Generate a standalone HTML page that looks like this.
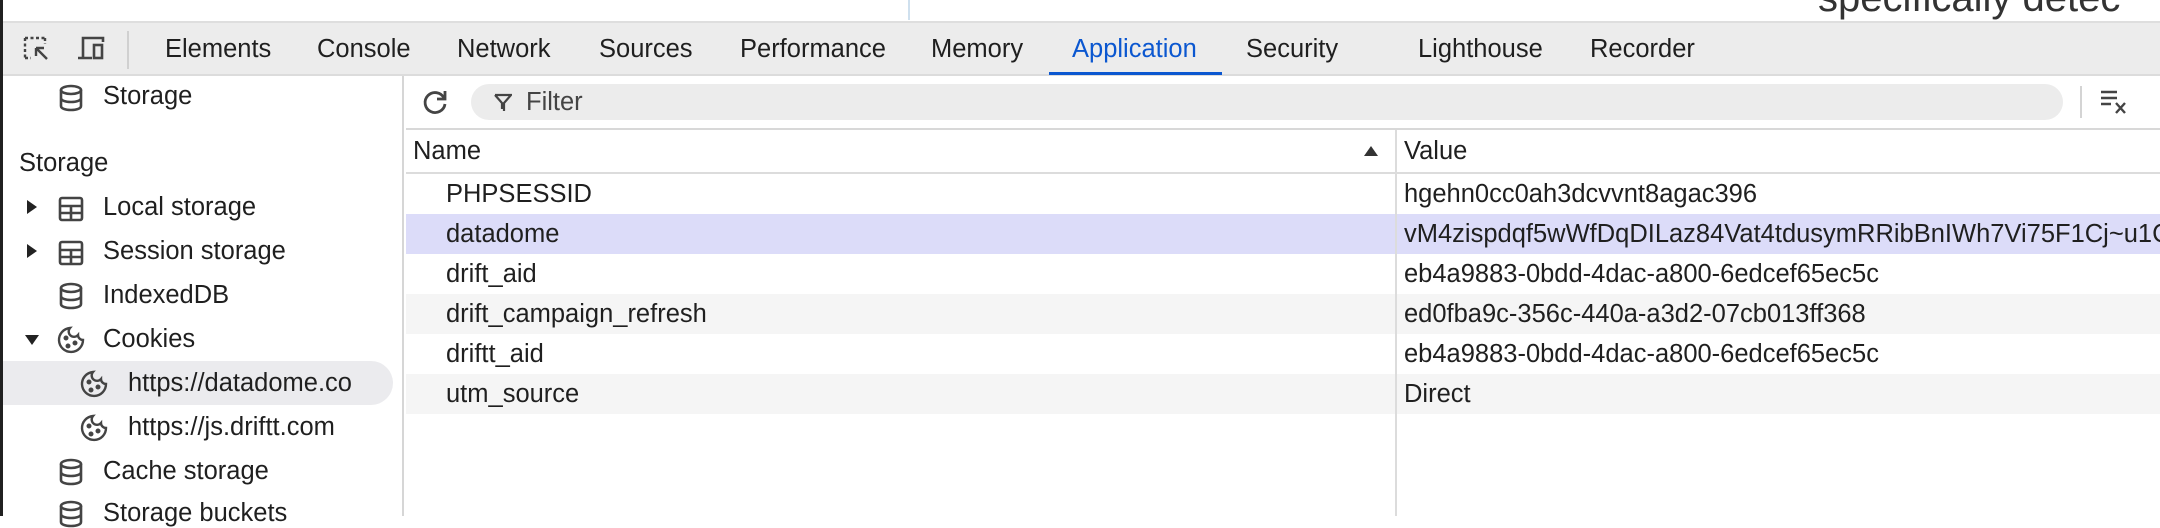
<!DOCTYPE html>
<html><head><meta charset="utf-8"><style>
*{margin:0;padding:0;box-sizing:border-box}
body{width:2160px;height:516px;overflow:hidden;background:#fff;font-family:"Liberation Sans",Arial,sans-serif;color:#1f1f1f;position:relative;font-size:25.5px}
.abs{position:absolute;white-space:nowrap}
#top{position:absolute;left:0;top:0;width:2160px;height:21px;background:#fff}
#tb{position:absolute;left:0;top:21px;width:2160px;height:55px;background:#ececec;border-top:2px solid #dedede;border-bottom:2px solid #dcdcdc}
.tab{position:absolute;top:12px;font-size:25.5px;color:#1f1f1f}
#side{position:absolute;left:3px;top:76px;width:401px;height:440px;background:#fff;border-right:2px solid #d6d6d6}
#lstrip{position:absolute;left:0;top:0;width:3px;height:516px;background:#202020}
.si{position:absolute;font-size:25.5px}
.tri{position:absolute}
.row{position:absolute;left:406px;width:1754px;height:40px}
.row span{position:absolute;top:6px;font-size:25.5px}
</style></head><body>
<div id="top"></div>
<div class="abs" style="left:908px;top:0;width:2px;height:20px;background:#cfe0ee"></div>
<div class="abs" style="left:1818px;top:-24px;font-size:40px;color:#333">specifically detec</div>
<div id="tb">
 <svg class="abs" style="left:22px;top:12px" width="30" height="28" viewBox="0 0 30 28" fill="none" stroke="#444" stroke-width="2.4"><path d="M3 3h20M3 3v20M3 23h6M23 3v6" stroke-dasharray="3 2.5"/><path d="M14 13l11 11M14 13h8M14 13v8"/></svg>
 <svg class="abs" style="left:76px;top:12px" width="32" height="28" viewBox="0 0 32 28" fill="none" stroke="#444" stroke-width="2.6"><path d="M7 22V3h20v4M2 23h14"/><rect x="18" y="10" width="8" height="13"/></svg>
 <div class="abs" style="left:127px;top:8px;width:2px;height:38px;background:#d0d0d0"></div>
 <div class="tab" style="left:165px">Elements</div>
 <div class="tab" style="left:317px">Console</div>
 <div class="tab" style="left:457px">Network</div>
 <div class="tab" style="left:599px">Sources</div>
 <div class="tab" style="left:740px">Performance</div>
 <div class="tab" style="left:931px">Memory</div>
 <div class="tab" style="left:1072px;color:#0b57d0">Application</div>
 <div class="abs" style="left:1049px;top:49px;width:173px;height:3px;background:#0b57d0"></div>
 <div class="tab" style="left:1246px">Security</div>
 <div class="tab" style="left:1418px">Lighthouse</div>
 <div class="tab" style="left:1590px">Recorder</div>
</div>
<div id="side">
 <svg class="abs" style="left:55px;top:8px" width="26" height="28" viewBox="0 0 26 28" fill="none" stroke="#444" stroke-width="2.6"><ellipse cx="13" cy="6" rx="10" ry="4"/><path d="M3 6v16c0 2.5 4.5 4 10 4s10-1.5 10-4V6M3 14c0 2.5 4.5 4 10 4s10-1.5 10-4"/></svg>
 <div class="si" style="left:100px;top:6px">Storage</div>
 <div class="si" style="left:16px;top:73px">Storage</div>
 <svg class="tri" style="left:23px;top:123px" width="12" height="16"><path d="M1 1l10 7-10 7z" fill="#222"/></svg>
 <svg class="abs" style="left:55px;top:120px" width="26" height="26" viewBox="0 0 26 26" fill="none" stroke="#444" stroke-width="2.6"><rect x="2" y="2" width="22" height="22" rx="2"/><path d="M2 10h22M2 17h22M13 10v14"/></svg>
 <div class="si" style="left:100px;top:117px">Local storage</div>
 <svg class="tri" style="left:23px;top:167px" width="12" height="16"><path d="M1 1l10 7-10 7z" fill="#222"/></svg>
 <svg class="abs" style="left:55px;top:164px" width="26" height="26" viewBox="0 0 26 26" fill="none" stroke="#444" stroke-width="2.6"><rect x="2" y="2" width="22" height="22" rx="2"/><path d="M2 10h22M2 17h22M13 10v14"/></svg>
 <div class="si" style="left:100px;top:161px">Session storage</div>
 <svg class="abs" style="left:55px;top:206px" width="26" height="28" viewBox="0 0 26 28" fill="none" stroke="#444" stroke-width="2.6"><ellipse cx="13" cy="6" rx="10" ry="4"/><path d="M3 6v16c0 2.5 4.5 4 10 4s10-1.5 10-4V6M3 14c0 2.5 4.5 4 10 4s10-1.5 10-4"/></svg>
 <div class="si" style="left:100px;top:205px">IndexedDB</div>
 <svg class="tri" style="left:21px;top:258px" width="16" height="12"><path d="M1 1h14l-7 10z" fill="#222"/></svg>
 <svg class="abs" style="left:53px;top:249px" width="30" height="30" viewBox="0 0 30 30" fill="none" stroke="#444" stroke-width="2.4"><path d="M14 3a12 12 0 1 0 13 12 5 5 0 0 1-5-5 5 5 0 0 1-8-7z"/><circle cx="10" cy="13" r="1.3" fill="#444"/><circle cx="12" cy="21" r="1.3" fill="#444"/><circle cx="19" cy="18" r="1.3" fill="#444"/></svg>
 <div class="si" style="left:100px;top:249px">Cookies</div>
 <div class="abs" style="left:0;top:285px;width:390px;height:44px;background:#ebebee;border-radius:0 22px 22px 0"></div>
 <svg class="abs" style="left:76px;top:293px" width="30" height="30" viewBox="0 0 30 30" fill="none" stroke="#444" stroke-width="2.4"><path d="M14 3a12 12 0 1 0 13 12 5 5 0 0 1-5-5 5 5 0 0 1-8-7z"/><circle cx="10" cy="13" r="1.3" fill="#444"/><circle cx="12" cy="21" r="1.3" fill="#444"/><circle cx="19" cy="18" r="1.3" fill="#444"/></svg>
 <div class="si" style="left:125px;top:293px">https://datadome.co</div>
 <svg class="abs" style="left:76px;top:337px" width="30" height="30" viewBox="0 0 30 30" fill="none" stroke="#444" stroke-width="2.4"><path d="M14 3a12 12 0 1 0 13 12 5 5 0 0 1-5-5 5 5 0 0 1-8-7z"/><circle cx="10" cy="13" r="1.3" fill="#444"/><circle cx="12" cy="21" r="1.3" fill="#444"/><circle cx="19" cy="18" r="1.3" fill="#444"/></svg>
 <div class="si" style="left:125px;top:337px">https://js.driftt.com</div>
 <svg class="abs" style="left:55px;top:382px" width="26" height="28" viewBox="0 0 26 28" fill="none" stroke="#444" stroke-width="2.6"><ellipse cx="13" cy="6" rx="10" ry="4"/><path d="M3 6v16c0 2.5 4.5 4 10 4s10-1.5 10-4V6M3 14c0 2.5 4.5 4 10 4s10-1.5 10-4"/></svg>
 <div class="si" style="left:100px;top:381px">Cache storage</div>
 <svg class="abs" style="left:55px;top:424px" width="26" height="28" viewBox="0 0 26 28" fill="none" stroke="#444" stroke-width="2.6"><ellipse cx="13" cy="6" rx="10" ry="4"/><path d="M3 6v16c0 2.5 4.5 4 10 4s10-1.5 10-4V6M3 14c0 2.5 4.5 4 10 4s10-1.5 10-4"/></svg>
 <div class="si" style="left:100px;top:423px">Storage buckets</div>
</div>
<div id="lstrip"></div>
<svg class="abs" style="left:421px;top:88px" width="28" height="28" viewBox="0 0 28 28" fill="none" stroke="#444" stroke-width="2.8"><path d="M23 10A10 10 0 1 0 24 16"/><path d="M24 3v8h-8" fill="none"/></svg>
<div class="abs" style="left:471px;top:84px;width:1592px;height:36px;background:#ececec;border-radius:18px"></div>
<svg class="abs" style="left:494px;top:93px" width="18" height="20" viewBox="0 0 18 20" fill="none" stroke="#444" stroke-width="2.2"><path d="M1 2h16L10 10v8M1 2l7 8v6"/></svg>
<div class="abs" style="left:526px;top:88px;color:#444">Filter</div>
<div class="abs" style="left:2080px;top:86px;width:2px;height:32px;background:#d4d4d4"></div>
<svg class="abs" style="left:2100px;top:88px" width="30" height="28" viewBox="0 0 30 28" fill="none" stroke="#444" stroke-width="2.4"><path d="M1 4h16M1 10h16M1 16h10M16 15l9 10M25 15l-9 10"/></svg>
<div class="abs" style="left:406px;top:128px;width:1754px;height:2px;background:#d8d8d8"></div>
<div class="abs" style="left:413px;top:137px">Name</div>
<svg class="abs" style="left:1363px;top:145px" width="16" height="12"><path d="M8 1l7 10H1z" fill="#333"/></svg>
<div class="abs" style="left:1404px;top:137px">Value</div>
<div class="abs" style="left:406px;top:172px;width:1754px;height:2px;background:#dcdcdc"></div>
<div class="row" style="top:174px;background:#fff"><span style="left:40px">PHPSESSID</span><span style="left:998px">hgehn0cc0ah3dcvvnt8agac396</span></div>
<div class="row" style="top:214px;background:#dcdcf9"><span style="left:40px">datadome</span><span style="left:998px">vM4zispdqf5wWfDqDILaz84Vat4tdusymRRibBnIWh7Vi75F1Cj~u1C</span></div>
<div class="row" style="top:254px;background:#fff"><span style="left:40px">drift_aid</span><span style="left:998px">eb4a9883-0bdd-4dac-a800-6edcef65ec5c</span></div>
<div class="row" style="top:294px;background:#f5f5f5"><span style="left:40px">drift_campaign_refresh</span><span style="left:998px">ed0fba9c-356c-440a-a3d2-07cb013ff368</span></div>
<div class="row" style="top:334px;background:#fff"><span style="left:40px">driftt_aid</span><span style="left:998px">eb4a9883-0bdd-4dac-a800-6edcef65ec5c</span></div>
<div class="row" style="top:374px;background:#f5f5f5"><span style="left:40px">utm_source</span><span style="left:998px">Direct</span></div>
<div class="abs" style="left:1395px;top:130px;width:2px;height:386px;background:#dcdcdc"></div>
</body></html>
